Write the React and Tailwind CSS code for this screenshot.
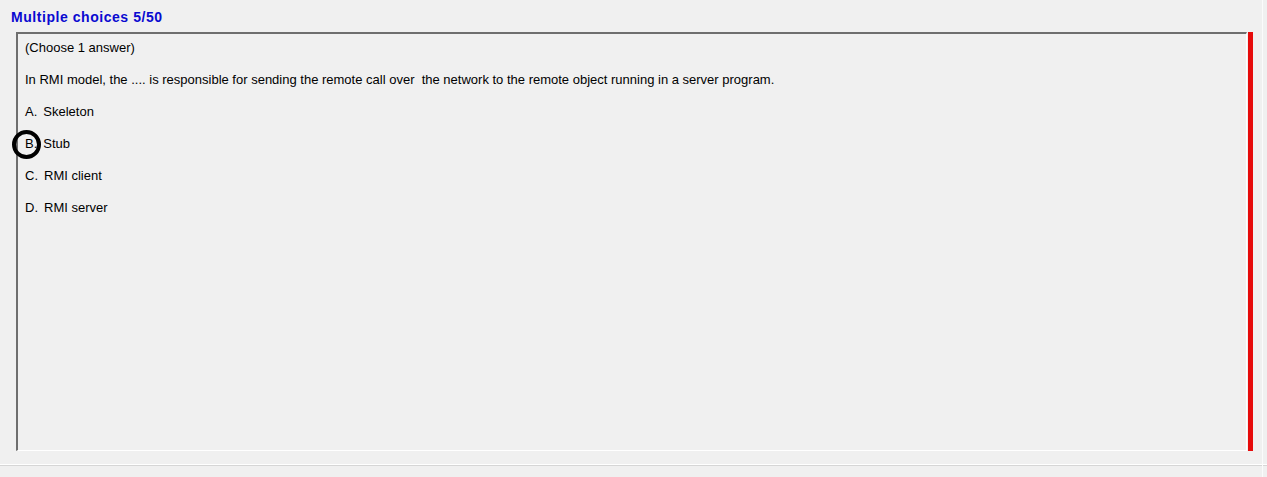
import React from "react";

export default function App() {
  const options = [
    ["A.", "Skeleton"],
    ["B.", "Stub"],
    ["C.", "RMI client"],
    ["D.", "RMI server"],
  ];
  return (
    <div
      className="relative w-[1267px] h-[477px] bg-[#f0f0f0] overflow-hidden flex flex-col"
      style={{ fontFamily: '"Liberation Sans", Arial, sans-serif' }}
    >
      <div className="absolute top-0 bottom-0 left-[1262px] w-px bg-[#fbfbfb]" />
      <div className="h-[32px] pl-[11px] pt-[10px] text-[14px] leading-[14px] font-bold tracking-[0.55px] text-[#0a0ad0]">
        Multiple choices 5/50
      </div>
      <div className="flex h-[419px]">
        <div className="ml-[16px] w-[1231px] h-full border-t-2 border-l-2 border-t-[#6e6e6e] border-l-[#6e6e6e] border-r border-b border-r-[#ffffff] border-b-[#ffffff] bg-[#f0f0f0]">
          <div className="pl-[7px] pt-[7px] flex flex-col gap-[18px] text-[13px] leading-[14px] text-black whitespace-pre">
            <div>(Choose 1 answer)</div>
            <div>In RMI model, the .... is responsible for sending the remote call over  the network to the remote object running in a server program.</div>
            {options.map(([l, t], i) => (
              <div key={i} className="relative flex">
                <span className="mr-[6px]">{l}</span>
                <span>{t}</span>
                {i === 1 && (
                  <div className="absolute left-[-13px] top-[-7px] w-[29px] h-[29px] rounded-full border-4 border-black" />
                )}
              </div>
            ))}
          </div>
        </div>
        <div className="ml-px w-[5px] h-full bg-[#e60b0b]" />
      </div>
      <div className="mt-[13px] h-px bg-[#ffffff]" />
      <div className="h-px bg-[#d6d6d6]" />
      <div className="flex-1 bg-[#f0f0f0]" />
    </div>
  );
}
